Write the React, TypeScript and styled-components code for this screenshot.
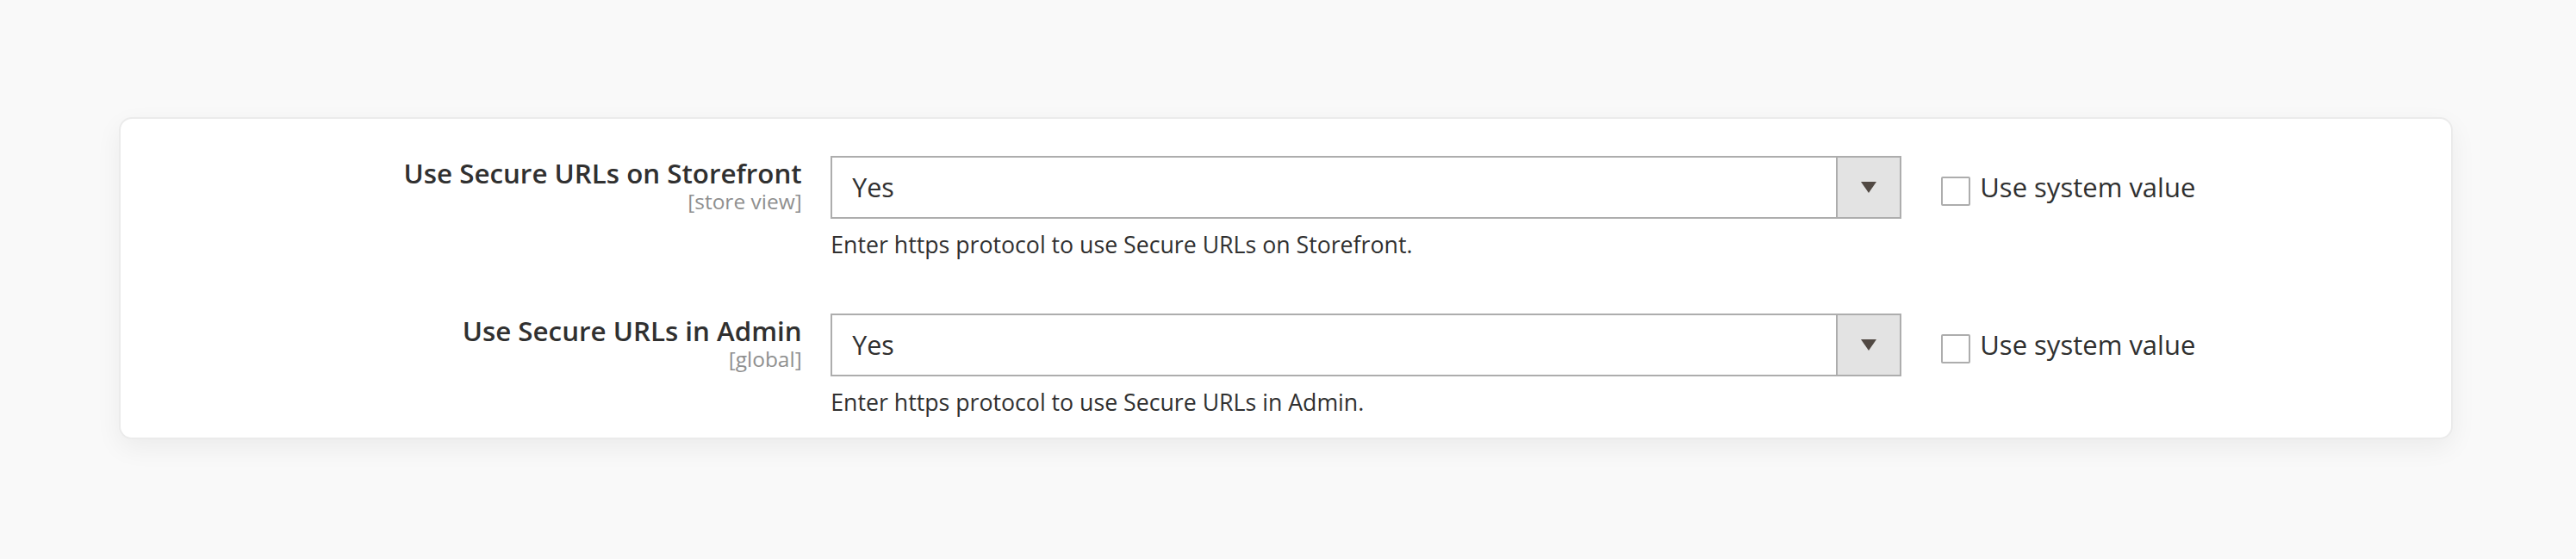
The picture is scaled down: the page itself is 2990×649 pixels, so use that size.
import React from "react";
import styled, { createGlobalStyle } from "styled-components";

const GlobalStyle = createGlobalStyle`
  html, body {
    margin: 0;
    padding: 0;
    background: #f9f9f9;
  }
  body {
    font-family: "Open Sans", "Liberation Sans", Arial, sans-serif;
    color: #303030;
  }
  * { box-sizing: border-box; }
`;

const Page = styled.div`
  width: 2990px;
  height: 649px;
  padding: 136px 0 0 138px;
  background: #f9f9f9;
`;

const Card = styled.section`
  width: 2709px;
  border: 2px solid #ebebeb;
  border-radius: 15px;
  background: #ffffff;
  box-shadow: 0 10px 30px rgba(0, 0, 0, 0.06);
  padding: 42.7px 0 24.3px 0;
  display: flex;
  flex-direction: column;
  gap: 63.1px;
`;

const Row = styled.div`
  display: grid;
  grid-template-columns: 790.7px 1243px auto;
  column-gap: 33.6px;
  align-items: start;
`;

const LabelCell = styled.div`
  text-align: right;
  padding-top: 1.5px;
`;

const LabelText = styled.div`
  font-size: 31.3px;
  line-height: 38px;
  font-weight: 600;
  color: #303030;
`;

const Scope = styled.div`
  font-size: 24.5px;
  line-height: 28px;
  font-weight: 400;
  color: #8f8f8f;
`;

const ControlCell = styled.div`
  display: flex;
  flex-direction: column;
`;

const Select = styled.div`
  height: 73px;
  border: 2px solid #adadad;
  background: #ffffff;
  display: flex;
  align-items: stretch;
`;

const SelectValue = styled.div`
  flex: 1;
  display: flex;
  align-items: center;
  padding-left: 23px;
  font-size: 30.4px;
  color: #303030;
`;

const SelectButton = styled.div`
  width: 74.6px;
  border-left: 2px solid #adadad;
  background: #e3e3e3;
  display: flex;
  align-items: center;
  justify-content: center;
`;

const Arrow = styled.span`
  width: 0;
  height: 0;
  border-left: 9px solid transparent;
  border-right: 9px solid transparent;
  border-top: 13px solid #514943;
  margin-left: 1px;
`;

const Hint = styled.div`
  margin-top: 12px;
  font-size: 26.7px;
  line-height: 35.2px;
  color: #303030;
`;

const UseDefault = styled.label`
  margin-left: 12.4px;
  padding-top: 18px;
  display: flex;
  align-items: flex-start;
  gap: 11px;
`;

const Checkbox = styled.span`
  width: 34px;
  height: 34px;
  margin-top: 6.3px;
  border: 2px solid #adadad;
  border-radius: 2px;
  background: #ffffff;
  flex: none;
`;

const UseDefaultText = styled.span`
  font-size: 31px;
  line-height: 37.2px;
  color: #303030;
  white-space: nowrap;
`;

type Field = {
  label: string;
  scope: string;
  value: string;
  hint: string;
};

const fields: Field[] = [
  {
    label: "Use Secure URLs on Storefront",
    scope: "[store view]",
    value: "Yes",
    hint: "Enter https protocol to use Secure URLs on Storefront.",
  },
  {
    label: "Use Secure URLs in Admin",
    scope: "[global]",
    value: "Yes",
    hint: "Enter https protocol to use Secure URLs in Admin.",
  },
];

export default function App() {
  return (
    <>
      <GlobalStyle />
      <Page>
        <Card>
          {fields.map((f) => (
            <Row key={f.label}>
              <LabelCell>
                <LabelText>{f.label}</LabelText>
                <Scope>{f.scope}</Scope>
              </LabelCell>
              <ControlCell>
                <Select>
                  <SelectValue>{f.value}</SelectValue>
                  <SelectButton>
                    <Arrow />
                  </SelectButton>
                </Select>
                <Hint>{f.hint}</Hint>
              </ControlCell>
              <UseDefault>
                <Checkbox />
                <UseDefaultText>Use system value</UseDefaultText>
              </UseDefault>
            </Row>
          ))}
        </Card>
      </Page>
    </>
  );
}
